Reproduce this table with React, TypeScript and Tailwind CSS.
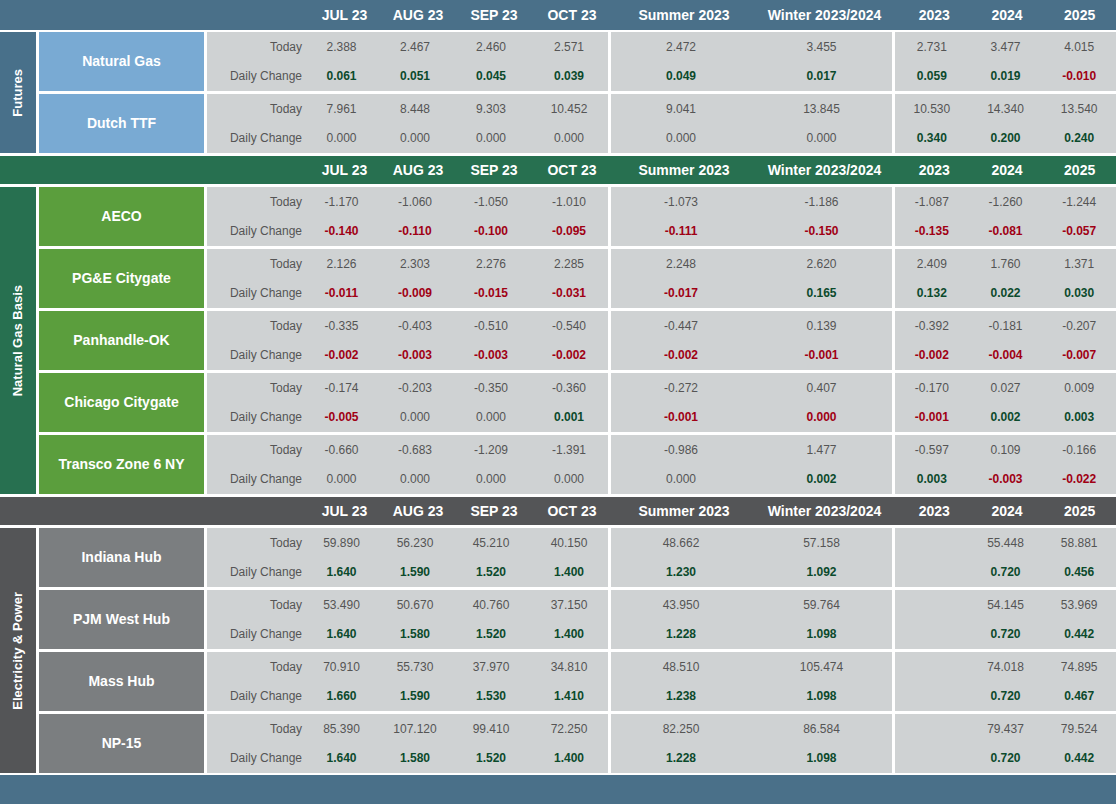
import React from "react";

type Row = { name: string; today: string[]; change: string[] };
type Section = {
  label: string;
  header: string;
  side: string;
  cell: string;
  first?: boolean;
  rows: Row[];
};

const sections: Section[] = [
  {
    label: "Futures",
    header: "bg-[#4a7089]",
    side: "bg-[#48708a]",
    cell: "bg-[#79aad3]",
    first: true,
    rows: [
      {
        name: "Natural Gas",
        today: ["2.388", "2.467", "2.460", "2.571", "2.472", "3.455", "2.731", "3.477", "4.015"],
        change: ["0.061", "0.051", "0.045", "0.039", "0.049", "0.017", "0.059", "0.019", "-0.010"],
      },
      {
        name: "Dutch TTF",
        today: ["7.961", "8.448", "9.303", "10.452", "9.041", "13.845", "10.530", "14.340", "13.540"],
        change: ["0.000", "0.000", "0.000", "0.000", "0.000", "0.000", "0.340", "0.200", "0.240"],
      },
    ],
  },
  {
    label: "Natural Gas Basis",
    header: "bg-[#277050]",
    side: "bg-[#277050]",
    cell: "bg-[#5b9e3d]",
    rows: [
      {
        name: "AECO",
        today: ["-1.170", "-1.060", "-1.050", "-1.010", "-1.073", "-1.186", "-1.087", "-1.260", "-1.244"],
        change: ["-0.140", "-0.110", "-0.100", "-0.095", "-0.111", "-0.150", "-0.135", "-0.081", "-0.057"],
      },
      {
        name: "PG&E Citygate",
        today: ["2.126", "2.303", "2.276", "2.285", "2.248", "2.620", "2.409", "1.760", "1.371"],
        change: ["-0.011", "-0.009", "-0.015", "-0.031", "-0.017", "0.165", "0.132", "0.022", "0.030"],
      },
      {
        name: "Panhandle-OK",
        today: ["-0.335", "-0.403", "-0.510", "-0.540", "-0.447", "0.139", "-0.392", "-0.181", "-0.207"],
        change: ["-0.002", "-0.003", "-0.003", "-0.002", "-0.002", "-0.001", "-0.002", "-0.004", "-0.007"],
      },
      {
        name: "Chicago Citygate",
        today: ["-0.174", "-0.203", "-0.350", "-0.360", "-0.272", "0.407", "-0.170", "0.027", "0.009"],
        // "!" marks a zero shown in red
        change: ["-0.005", "0.000", "0.000", "0.001", "-0.001", "!0.000", "-0.001", "0.002", "0.003"],
      },
      {
        name: "Transco Zone 6 NY",
        today: ["-0.660", "-0.683", "-1.209", "-1.391", "-0.986", "1.477", "-0.597", "0.109", "-0.166"],
        change: ["0.000", "0.000", "0.000", "0.000", "0.000", "0.002", "0.003", "-0.003", "-0.022"],
      },
    ],
  },
  {
    label: "Electricity & Power",
    header: "bg-[#545557]",
    side: "bg-[#545557]",
    cell: "bg-[#7b7e80]",
    rows: [
      {
        name: "Indiana Hub",
        today: ["59.890", "56.230", "45.210", "40.150", "48.662", "57.158", "", "55.448", "58.881"],
        change: ["1.640", "1.590", "1.520", "1.400", "1.230", "1.092", "", "0.720", "0.456"],
      },
      {
        name: "PJM West Hub",
        today: ["53.490", "50.670", "40.760", "37.150", "43.950", "59.764", "", "54.145", "53.969"],
        change: ["1.640", "1.580", "1.520", "1.400", "1.228", "1.098", "", "0.720", "0.442"],
      },
      {
        name: "Mass Hub",
        today: ["70.910", "55.730", "37.970", "34.810", "48.510", "105.474", "", "74.018", "74.895"],
        change: ["1.660", "1.590", "1.530", "1.410", "1.238", "1.098", "", "0.720", "0.467"],
      },
      {
        name: "NP-15",
        today: ["85.390", "107.120", "99.410", "72.250", "82.250", "86.584", "", "79.437", "79.524"],
        change: ["1.640", "1.580", "1.520", "1.400", "1.228", "1.098", "", "0.720", "0.442"],
      },
    ],
  },
];

const columns = ["JUL 23", "AUG 23", "SEP 23", "OCT 23", "Summer 2023", "Winter 2023/2024", "2023", "2024", "2025"];

const Change = ({ v }: { v: string }) => {
  if (v === "") return <span />;
  if (v.startsWith("!")) return <span className="font-bold text-[#a00014]">{v.slice(1)}</span>;
  if (v.startsWith("-")) return <span className="font-bold text-[#a00014]">{v}</span>;
  if (parseFloat(v) === 0) return <span className="text-[#555555]">{v}</span>;
  return <span className="font-bold text-[#0b4a2c]">{v}</span>;
};

const Line = ({ children }: { children: React.ReactNode }) => (
  <div className="flex h-[29.5px] items-center justify-center">{children}</div>
);

const Panel = ({ cols, today, change, label }: { cols: string; today: string[]; change: string[]; label?: boolean }) => (
  <div className={`grid ${cols} bg-[#cfd2d3] text-[12px] text-[#555555]`}>
    {label && (
      <div className="flex flex-col items-end pr-[3px]">
        <div className="flex h-[29.5px] items-center">Today</div>
        <div className="flex h-[29.5px] items-center">Daily Change</div>
      </div>
    )}
    {today.map((t, i) => (
      <div key={i} className="flex flex-col">
        <Line>{t}</Line>
        <Line>
          <Change v={change[i]} />
        </Line>
      </div>
    ))}
  </div>
);

const HeaderBar = ({ color, first }: { color: string; first?: boolean }) => (
  <div className={`flex ${first ? "h-[30px]" : "h-[28px]"} gap-[3px] ${color} text-[14px] font-bold text-white`}>
    <div className="w-[305px] shrink-0" />
    <div className="grid w-[303px] grid-cols-[73px_74px_78px_78px]">
      {columns.slice(0, 4).map((c) => (
        <div key={c} className="flex items-center justify-center">{c}</div>
      ))}
    </div>
    <div className="grid w-[281px] grid-cols-[140px_141px]">
      {columns.slice(4, 6).map((c) => (
        <div key={c} className="flex items-center justify-center">{c}</div>
      ))}
    </div>
    <div className="grid w-[221px] grid-cols-3">
      {columns.slice(6).map((c) => (
        <div key={c} className="flex items-center justify-center">{c}</div>
      ))}
    </div>
  </div>
);

export default function App() {
  return (
    <div className="flex h-[804px] w-[1116px] flex-col bg-white font-['Liberation_Sans',Arial,sans-serif]">
      {sections.map((s, si) => (
        <div key={s.label} className={si === 0 ? "" : "mt-[3px]"}>
          <HeaderBar color={s.header} first={s.first} />
          <div className={`flex gap-[3px] ${s.first ? "mt-[2px]" : "mt-[3px]"}`}>
            <div className={`flex w-[36px] shrink-0 items-center justify-center ${s.side}`}>
              <span className="rotate-180 whitespace-nowrap text-[13px] font-bold text-white [writing-mode:vertical-rl]">
                {s.label}
              </span>
            </div>
            <div className="flex flex-col gap-[3px]">
              {s.rows.map((r) => (
                <div key={r.name} className="flex h-[59px] gap-[3px]">
                  <div className={`flex w-[165px] items-center justify-center text-[14px] font-bold text-white ${s.cell}`}>
                    {r.name}
                  </div>
                  <Panel
                    cols="w-[401px] grid-cols-[98px_73px_74px_78px_78px]"
                    today={r.today.slice(0, 4)}
                    change={r.change.slice(0, 4)}
                    label
                  />
                  <Panel cols="w-[281px] grid-cols-[140px_141px]" today={r.today.slice(4, 6)} change={r.change.slice(4, 6)} />
                  <Panel cols="w-[221px] grid-cols-3" today={r.today.slice(6)} change={r.change.slice(6)} />
                </div>
              ))}
            </div>
          </div>
        </div>
      ))}
      <div className="mt-[2px] flex-1 bg-[#4a7089]" />
    </div>
  );
}
